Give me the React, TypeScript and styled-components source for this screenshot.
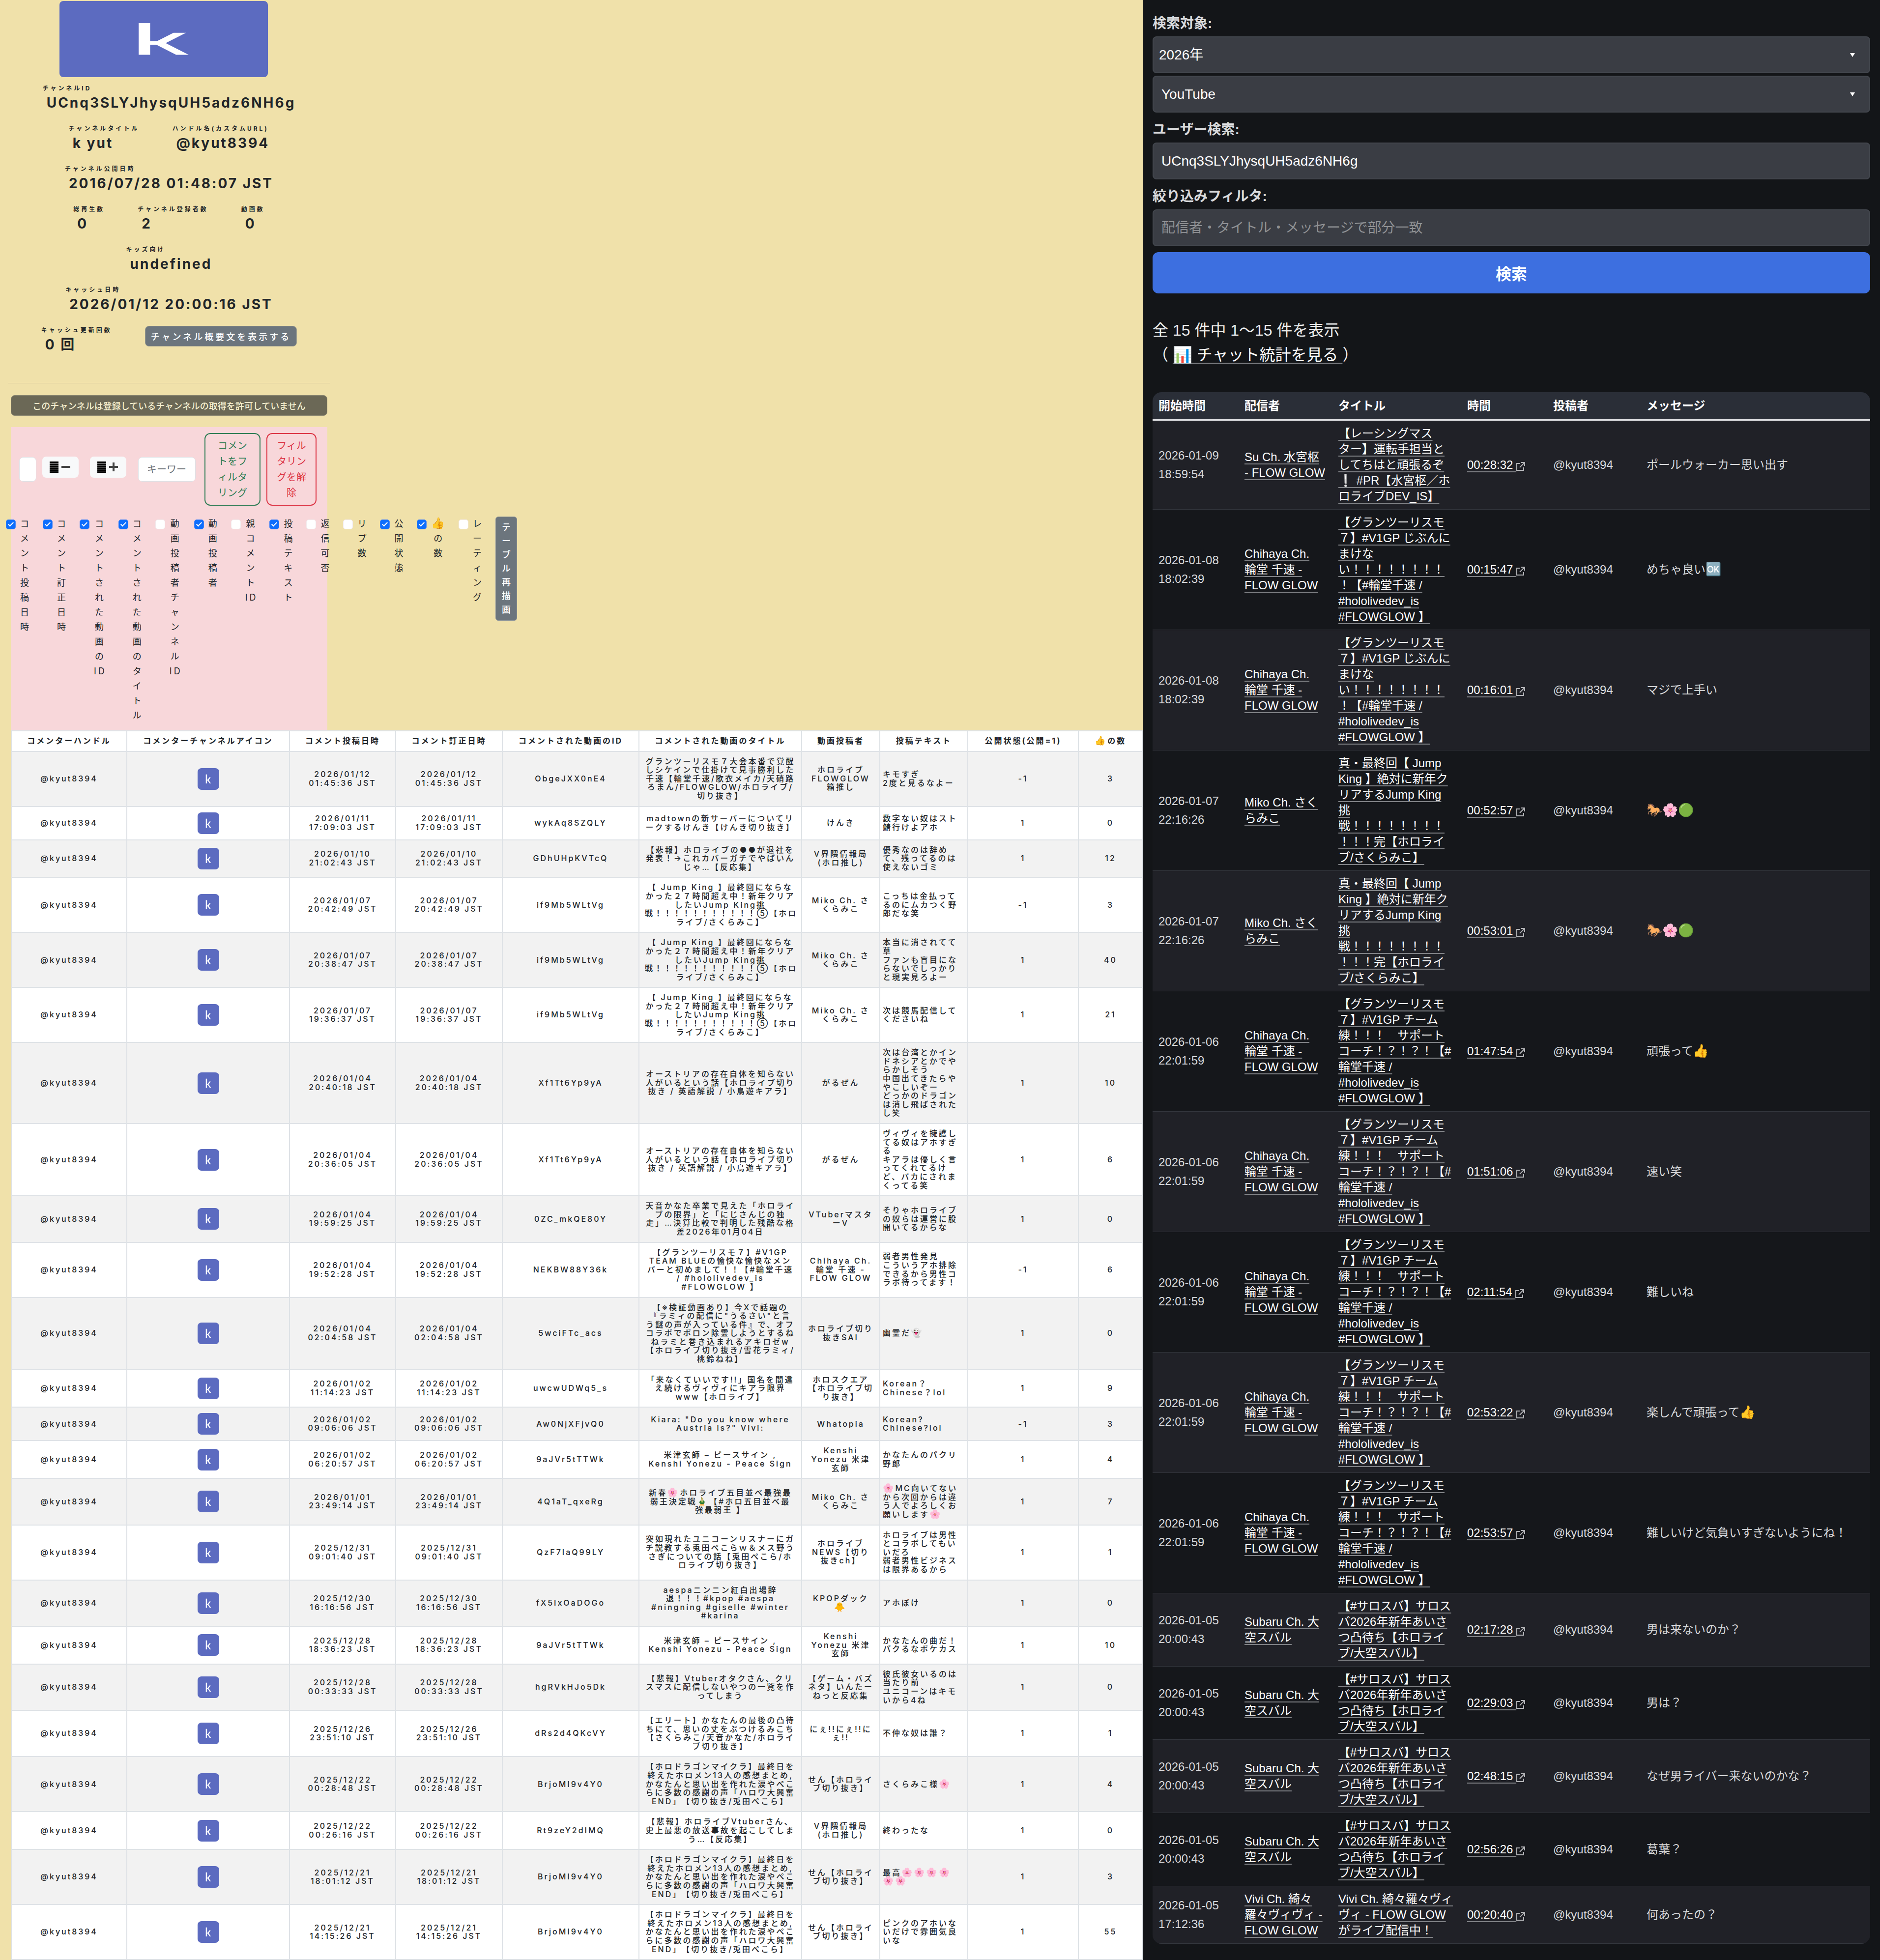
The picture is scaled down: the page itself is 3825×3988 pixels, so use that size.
import React from 'react';
import styled, { createGlobalStyle, css } from 'styled-components';

const interStack = `Inter, "Noto Sans CJK JP", sans-serif`;
const helvStack = `"Liberation Sans", "Noto Sans CJK JP", sans-serif`;

const GlobalStyle = createGlobalStyle`
  *, *::before, *::after { box-sizing: border-box; }
  body {
    margin: 0;
    background: #131518;
    text-spacing-trim: space-all;
  }
  button, input, select { font-family: inherit; margin: 0; }
`;

const Page = styled.div`
  display: grid;
  grid-template-columns: 31fr 20fr;
  min-height: 100vh;
`;

const Emoji = styled.span<{ $size: number }>`
  font-family: "Noto Color Emoji", ${interStack};
  font-size: ${(p) => p.$size}px;
  font-weight: 400;
  line-height: 0;
`;

/* ---------- left pane: channel and comments ---------- */

const ChannelPane = styled.main`
  background: #f0e1aa;
  color: #212529;
  font-family: ${interStack};
  font-size: 16px;
  padding: 2px 0 0 22px;
  min-width: 0;
`;

const Profile = styled.section`
  display: flex;
  flex-direction: column;
  align-items: center;
  gap: 24px;
  width: 656px;
  margin-left: -6px;
  padding-bottom: 60px;
  border-bottom: 1px solid #c9bd95;
`;

const Banner = styled.svg`
  width: 424px;
  height: 155px;
  margin: 0 22px -12px 0;
  border-radius: 8px;
`;

const FactRow = styled.div`
  display: flex;
  justify-content: center;
  align-items: flex-start;
  gap: 67px;
`;

const Fact = styled.dl`
  margin: 0;
  font-weight: 700;
`;

const FactName = styled.dt`
  font-size: 12px;
  line-height: 22px;
  letter-spacing: 4px;
`;

const FactValue = styled.dd`
  margin: 0 0 0 8px;
  font-size: 28px;
  line-height: 36px;
  letter-spacing: 3px;
`;

const OverviewButton = styled.button`
  height: 42px;
  margin-top: 2px;
  padding: 0 11px;
  border: 1px solid #a5a594;
  border-radius: 8px;
  background: #6c757d;
  color: #fff;
  font-size: 18px;
  font-weight: 500;
  letter-spacing: 4px;
`;

const NoticeButton = styled.button`
  display: block;
  width: 644px;
  height: 42px;
  margin: 24px 0 23px;
  border: 1px solid #8d8972;
  border-radius: 8px;
  background: #6b6856;
  color: #f5efcf;
  font-size: 18px;
  font-weight: 500;
`;

const FilterPanel = styled.section`
  width: 644px;
  padding: 12px 17px 15px;
  background: #f8d7da;
`;

const FilterBar = styled.div`
  display: flex;
  align-items: center;
  gap: 12px;
`;

const FilterInput = styled.input<{ $width: number; $pad: number }>`
  width: ${(p) => p.$width}px;
  height: 50px;
  padding: 0 ${(p) => p.$pad}px;
  border: 1px solid #dee2e6;
  border-radius: 8px;
  background: #fff;
  font-size: 20px;
  &::placeholder { color: #6b7075; }
`;

const StepButtons = styled.div`
  display: flex;
  gap: 23px;
  padding-bottom: 9px;
  margin-right: 12px;
`;

const StepButton = styled.button`
  display: grid;
  place-items: center;
  width: 74px;
  height: 43px;
  padding: 0;
  border: 0;
  border-radius: 8px;
  background: #f8f9fa;
`;

const OutlineButton = styled.button<{ $tone: string; $width: number }>`
  width: ${(p) => p.$width}px;
  height: 148px;
  padding: 0;
  border: 2px solid ${(p) => p.$tone};
  border-radius: 12px;
  background: transparent;
  color: ${(p) => p.$tone};
  font-size: 20px;
  line-height: 32px;
  white-space: pre;
`;

const FilterActions = styled.div`
  display: flex;
  gap: 12px;
  margin-left: 6px;
`;

const ColumnToggles = styled.div`
  display: flex;
  align-items: flex-start;
  gap: 24px;
  margin: 22px 0 0 -27px;
  width: max-content;
`;

const Toggle = styled.label`
  display: flex;
  align-items: flex-start;
  gap: 9px;
`;

const ToggleText = styled.span`
  font-size: 18px;
  line-height: 30px;
  letter-spacing: 4px;
  text-align: center;
  white-space: pre;
`;

const Tick = styled.input`
  appearance: none;
  position: relative;
  flex: none;
  width: 20px;
  height: 20px;
  margin-top: 6px;
  border: 1px solid #f1eaec;
  border-radius: 5px;
  background: #fff;
  &:checked {
    border-color: #4a86f5;
    background: #0d6efd;
  }
  &:checked::after {
    content: '';
    position: absolute;
    left: 6px;
    top: 2px;
    width: 6px;
    height: 11px;
    border: solid #fff;
    border-width: 0 2px 2px 0;
    transform: rotate(45deg);
  }
`;

const RedrawButton = styled.button`
  width: 44px;
  padding: 7px 0;
  border: 1px solid #8d949a;
  border-radius: 6px;
  background: #6c757d;
  color: #fff;
  font-size: 18px;
  font-weight: 500;
  line-height: 28px;
  white-space: pre;
`;

const CommentTable = styled.table`
  width: 100%;
  table-layout: fixed;
  border-collapse: collapse;
  background: #fff;
  letter-spacing: 3px;
  line-height: 1.1;
  text-align: center;
  white-space: pre;
  th, td {
    padding: 11px;
    border: 2px solid #dee2e6;
    vertical-align: middle;
  }
  th { font-weight: 700; }
  td { font-weight: 500; }
  tbody tr:nth-child(odd) { background: #f2f2f2; }
  td:nth-child(8) {
    padding-left: 5px;
    text-align: left;
  }
`;

const Icon44 = styled.svg`
  display: block;
  width: 44px;
  height: 44px;
  margin: 0 auto;
  border-radius: 8px;
`;

/* ---------- right pane: chat search ---------- */

const SearchPane = styled.aside`
  min-width: 0;
  padding: 13px 20px 24px;
  background: #131518;
  color: #eceded;
  font-family: ${helvStack};
  font-size: 28px;
`;

const FieldLabel = styled.label`
  display: block;
  margin: 12px 0 4px;
  line-height: 45px;
  font-weight: 700;
  color: #d9dadc;
`;

const control = css`
  display: block;
  width: 100%;
  height: 75px;
  border: 2px solid #43474e;
  border-radius: 8px;
  background: #3a3d44;
  color: #fff;
  font-size: 28px;
`;

const SelectBox = styled.div`
  position: relative;
  margin-bottom: 5px;
`;

const Select = styled.select<{ $inset: number }>`
  ${control}
  appearance: none;
  padding: 0 ${(p) => p.$inset}px;
`;

const Caret = styled.svg`
  position: absolute;
  right: 30px;
  top: 34px;
  width: 12px;
  height: 8px;
  pointer-events: none;
`;

const TextField = styled.input`
  ${control}
  padding: 0 16px;
  &::placeholder { color: #8f9194; }
`;

const SearchButton = styled.button`
  display: block;
  width: 100%;
  height: 84px;
  margin-top: 12px;
  border: 0;
  border-radius: 12px;
  background: #3d6fe0;
  color: #fff;
  font-size: 32px;
  font-weight: 700;
`;

const Summary = styled.p`
  margin: 50px 0 51px;
  font-size: 32px;
  line-height: 50px;
`;

const Link = styled.a`
  color: #fff;
  text-decoration: underline;
  text-decoration-color: #808286;
  text-decoration-thickness: 2px;
  text-underline-offset: 5px;
  text-decoration-skip-ink: none;
`;

const ChatTable = styled.table`
  width: 100%;
  table-layout: fixed;
  border-spacing: 0;
  border-radius: 18px;
  overflow: hidden;
  background: #15171b;
  color: #d8d9db;
  font-size: 24px;
  line-height: 32px;
  text-align: left;
  white-space: pre;
  th {
    padding: 12px 12px 11px;
    background: #2a2e37;
    border-bottom: 3px solid #dcdde0;
    color: #fff;
    font-weight: 700;
  }
  td {
    padding: 10px 12px;
    border-bottom: 1px solid #33363d;
    vertical-align: middle;
  }
  tbody tr:nth-child(odd) { background: #202127; }
`;

const Stamp = styled.time`
  line-height: 38px;
`;

const OpenIcon = styled.svg`
  width: 18px;
  height: 18px;
  vertical-align: -4px;
`;

/* ---------- drawings ---------- */

const LogoMark = () => (
  <>
    <rect width="100" height="100" fill="#5c6bc0" />
    <g fill="#fff">
      <rect x="38" y="29" width="5.5" height="41.6" />
      <rect x="43" y="52.8" width="5" height="4.6" />
      <rect width="6" height="13.6" transform="translate(54.7 41.8) skewX(-35.7)" />
      <rect width="6" height="15.3" transform="translate(45 55.3) skewX(35.7)" />
    </g>
  </>
);

const StepGlyph = ({ plus }: { plus?: boolean }) => (
  <svg width="44" height="26" viewBox="0 0 44 26" aria-hidden="true">
    {[0, 4, 8, 12, 16, 20].map((y) => (
      <rect key={y} x="0" y={y + 1} width="18" height="3" fill="#000" />
    ))}
    <rect x="24" y="10" width="18" height="4" fill="#444" />
    {plus && <rect x="31" y="3" width="4" height="18" fill="#444" />}
  </svg>
);

/* ---------- data ---------- */

const facts: [string, string][][] = [
  [['チャンネルID', 'UCnq3SLYJhysqUH5adz6NH6g']],
  [['チャンネルタイトル', 'k yut'], ['ハンドル名(カスタムURL)', '@kyut8394']],
  [['チャンネル公開日時', '2016/07/28 01:48:07 JST']],
  [['総再生数', '0'], ['チャンネル登録者数', '2'], ['動画数', '0']],
  [['キッズ向け', 'undefined']],
  [['キャッシュ日時', '2026/01/12 20:00:16 JST']],
];

const toggles: [string, boolean][] = [
  ['コメント投稿日時', true],
  ['コメント訂正日時', true],
  ['コメントされた動画のID', true],
  ['コメントされた動画のタイトル', true],
  ['動画投稿者チャンネルID', false],
  ['動画投稿者', true],
  ['親コメントID', false],
  ['投稿テキスト', true],
  ['返信可否', false],
  ['リプ数', false],
  ['公開状態', true],
  ['👍の数', true],
  ['レーティング', false],
];

/* one character per line, keeping "ID" together */
const stacked = (s: string) => (s.match(/ID|./gu) || []).join('\n');

/* sets emoji in the colour font at their own size */
const withEmoji = (s: string, size: number) =>
  s.split(/([\u{1F000}-\u{1FAFF}]+)/u).map((part, i) =>
    i % 2 ? <Emoji key={i} $size={size}>{part}</Emoji> : part,
  );

const commentHeads = [
  'コメンターハンドル', 'コメンターチャンネルアイコン', 'コメント投稿日時', 'コメント訂正日時',
  'コメントされた動画のID', 'コメントされた動画のタイトル', '動画投稿者', '投稿テキスト',
  '公開状態(公開=1)', '👍の数',
];
const commentCols = [235, 331, 216, 217, 278, 331, 159, 179, 225, 131];

const jump = '【 Jump King 】最終回にならな\nかった２７時間超え中！新年クリア\nしたいJump King挑\n戦！！！！！！！！！！！⑤【ホロ\nライブ/さくらみこ】';
const austria = 'オーストリアの存在自体を知らない\n人がいるという話【ホロライブ切り\n抜き / 英語解説 / 小鳥遊キアラ】';
const dragon = '【ホロドラゴンマイクラ】最終日を\n終えたホロメン13人の感想まとめ,\nかなたんと思い出を作れた涙やぺこ\nらに多数の感謝の声「ハロワ大興奮\nEND」【切り抜き/兎田ぺこら】';
const peace = '米津玄師 – ピースサイン ,\nKenshi Yonezu - Peace Sign';
const miko = 'Miko Ch. さ\nくらみこ';
const kenshi = 'Kenshi\nYonezu 米津\n玄師';
const sen = 'せん【ホロライ\nブ切り抜き】';

/* date, video id, title, author, text, state, likes */
const comments: [string, string, string, string, string, string, string][] = [
  ['2026/01/12\n01:45:36 JST', 'ObgeJXX0nE4', 'グランツーリスモ７大会本番で覚醒\nしシケインで仕掛けて見事勝利した\n千速【輪堂千速/歌衣メイカ/天硝路\nろまん/FLOWGLOW/ホロライブ/\n切り抜き】', 'ホロライブ\nFLOWGLOW\n箱推し', 'キモすぎ\n2度と見るなよー', '-1', '3'],
  ['2026/01/11\n17:09:03 JST', 'wykAq8SZQLY', 'madtownの新サーバーについてリ\nークするけんき【けんき切り抜き】', 'けんき', '数字ない奴はスト\n鯖行けよアホ', '1', '0'],
  ['2026/01/10\n21:02:43 JST', 'GDhUHpKVTcQ', '【悲報】ホロライブの●●が退社を\n発表！→これカバーガチでやばいん\nじゃ…【反応集】', 'V界隈情報局\n(ホロ推し)', '優秀なのは辞め\nて、残ってるのは\n使えないゴミ', '1', '12'],
  ['2026/01/07\n20:42:49 JST', 'if9Mb5WLtVg', jump, miko, 'こっちは金払って\nるのにムカつく野\n郎だな笑', '-1', '3'],
  ['2026/01/07\n20:38:47 JST', 'if9Mb5WLtVg', jump, miko, '本当に消されてて\n草\nファンも盲目にな\nらないでしっかり\nと現実見ろよー', '1', '40'],
  ['2026/01/07\n19:36:37 JST', 'if9Mb5WLtVg', jump, miko, '次は競馬配信して\nくださいね', '1', '21'],
  ['2026/01/04\n20:40:18 JST', 'Xf1Tt6Yp9yA', austria, 'がるぜん', '次は台湾とかイン\nドネシアとかでや\nらかしそう\n中国出てきたらや\nやこしいぞー\nどっかのドラゴン\nは消し飛ばされた\nし笑', '1', '10'],
  ['2026/01/04\n20:36:05 JST', 'Xf1Tt6Yp9yA', austria, 'がるぜん', 'ヴィヴィを擁護し\nてる奴はアホすぎ\nる\nキアラは優しく言\nってくれてるけ\nど、バカにされま\nくってる笑', '1', '6'],
  ['2026/01/04\n19:59:25 JST', '0ZC_mkQE80Y', '天音かなた卒業で見えた「ホロライ\nブの限界」と「にじさんじの独\n走」…決算比較で判明した残酷な格\n差2026年01月04日', 'VTuberマスタ\nーV', 'そりゃホロライブ\nの奴らは運営に股\n開いてるからな', '1', '0'],
  ['2026/01/04\n19:52:28 JST', 'NEKBW88Y36k', '【グランツーリスモ７】#V1GP\nTEAM BLUEの愉快な愉快なメン\nバーと初めまして！！【#輪堂千速\n/ #hololivedev_is\n#FLOWGLOW 】', 'Chihaya Ch.\n輪堂 千速 -\nFLOW GLOW', '弱者男性発見\nこういうアホ排除\nできるから男性コ\nラボ待ってます！', '-1', '6'],
  ['2026/01/04\n02:04:58 JST', '5wciFTc_acs', '【※検証動画あり】今Xで話題の\n『ラミィの配信に"うるさい"と言\nう謎の声が入っている件』で、オフ\nコラボでボロン除霊しようとするね\nねラミと巻き込まれるアキロゼw\n【ホロライブ切り抜き/雪花ラミィ/\n桃鈴ねね】', 'ホロライブ切り\n抜きSAI', '幽霊だ👻', '1', '0'],
  ['2026/01/02\n11:14:23 JST', 'uwcwUDWq5_s', '「来なくていいです!!」国名を間違\nえ続けるヴィヴィにキアラ限界\nwww【ホロライブ】', 'ホロスクエア\n【ホロライブ切\nり抜き】', 'Korean？\nChinese？lol', '1', '9'],
  ['2026/01/02\n09:06:06 JST', 'Aw0NjXFjvQ0', 'Kiara: "Do you know where\nAustria is?" Vivi:', 'Whatopia', 'Korean?\nChinese?lol', '-1', '3'],
  ['2026/01/02\n06:20:57 JST', '9aJVr5tTTWk', peace, kenshi, 'かなたんのパクリ\n野郎', '1', '4'],
  ['2026/01/01\n23:49:14 JST', '4Q1aT_qxeRg', '新春🌸ホロライブ五目並べ最強最\n弱王決定戦🎍【#ホロ五目並べ最\n強最弱王 】', miko, '🌸MC向いてない\nから次回からは違\nう人でよろしくお\n願いします🌸', '1', '7'],
  ['2025/12/31\n09:01:40 JST', 'QzF7IaQ99LY', '突如現れたユニコーンリスナーにガ\nチ説教する兎田ぺこらｗ＆メス野う\nさぎについての話【兎田ぺこら/ホ\nロライブ切り抜き】', 'ホロライブ\nNEWS【切り\n抜きch】', 'ホロライブは男性\nとコラボしてもい\nいだろ\n弱者男性ビジネス\nは限界あるから', '1', '1'],
  ['2025/12/30\n16:16:56 JST', 'fX5IxOaDOGo', 'aespaニンニン紅白出場辞\n退！！！#kpop #aespa\n#ningning #giselle #winter\n#karina', 'KPOPダック\n🐥', 'アホぼけ', '1', '0'],
  ['2025/12/28\n18:36:23 JST', '9aJVr5tTTWk', peace, kenshi, 'かなたんの曲だ！\nパクるなボケカス', '1', '10'],
  ['2025/12/28\n00:33:33 JST', 'hgRVkHJo5Dk', '【悲報】Vtuberオタクさん、クリ\nスマスに配信しないやつの一覧を作\nってしまう', '【ゲーム・バズ\nネタ】いんたー\nねっと反応集', '彼氏彼女いるのは\n当たり前\nユニコーンはキモ\nいから4ね', '1', '0'],
  ['2025/12/26\n23:51:10 JST', 'dRs2d4QKcVY', '【エリート】かなたんの最後の凸待\nちにて、思いの丈をぶつけるみこち\n【さくらみこ/天音かなた/ホロライ\nブ切り抜き】', 'にぇ!!にぇ!!に\nぇ!!', '不仲な奴は誰？', '1', '1'],
  ['2025/12/22\n00:28:48 JST', 'BrjoMI9v4Y0', dragon, sen, 'さくらみこ様🌸', '1', '4'],
  ['2025/12/22\n00:26:16 JST', 'Rt9zeY2dIMQ', '【悲報】ホロライブVtuberさん、\n史上最悪の放送事故を起こしてしま\nう…【反応集】', 'V界隈情報局\n(ホロ推し)', '終わったな', '1', '0'],
  ['2025/12/21\n18:01:12 JST', 'BrjoMI9v4Y0', dragon, sen, '最高🌸🌸🌸🌸\n🌸🌸', '1', '3'],
  ['2025/12/21\n14:15:26 JST', 'BrjoMI9v4Y0', dragon, sen, 'ピンクのアホいな\nいだけで雰囲気良\nいな', '1', '55'],
];

const chatHeads = ['開始時間', '配信者', 'タイトル', '時間', '投稿者', 'メッセージ'];
const chatCols = ['175px', '191px', '262px', '175px', '190px', 'auto'];

const chihaya = 'Chihaya Ch.\n輪堂 千速 -\nFLOW GLOW';
const mikoCh = 'Miko Ch. さく\nらみこ';
const subaru = 'Subaru Ch. 大\n空スバル';
const v1gp = '【グランツーリスモ\n７】#V1GP じぶんに\nまけな\nい！！！！！！！！\n！【#輪堂千速 /\n#hololivedev_is\n#FLOWGLOW 】';
const team = '【グランツーリスモ\n７】#V1GP チーム\n練！！！　サポート\nコーチ！？！？！【#\n輪堂千速 /\n#hololivedev_is\n#FLOWGLOW 】';
const king = '真・最終回【 Jump\nKing 】絶対に新年ク\nリアするJump King\n挑\n戦！！！！！！！！\n！！！完【ホロライ\nブ/さくらみこ】';
const saros = '【#サロスバ】サロス\nバ2026年新年あいさ\nつ凸待ち【ホロライ\nブ/大空スバル】';

/* start, streamer, title, offset, message */
const chats: [string, string, string, string, string][] = [
  ['2026-01-09\n18:59:54', 'Su Ch. 水宮枢\n- FLOW GLOW', '【レーシングマス\nター】運転手担当と\nしてちはと頑張るぞ\n❕ #PR【水宮枢／ホ\nロライブDEV_IS】', '00:28:32', 'ポールウォーカー思い出す'],
  ['2026-01-08\n18:02:39', chihaya, v1gp, '00:15:47', 'めちゃ良い🆗'],
  ['2026-01-08\n18:02:39', chihaya, v1gp, '00:16:01', 'マジで上手い'],
  ['2026-01-07\n22:16:26', mikoCh, king, '00:52:57', '🐎🌸🟢'],
  ['2026-01-07\n22:16:26', mikoCh, king, '00:53:01', '🐎🌸🟢'],
  ['2026-01-06\n22:01:59', chihaya, team, '01:47:54', '頑張って👍'],
  ['2026-01-06\n22:01:59', chihaya, team, '01:51:06', '速い笑'],
  ['2026-01-06\n22:01:59', chihaya, team, '02:11:54', '難しいね'],
  ['2026-01-06\n22:01:59', chihaya, team, '02:53:22', '楽しんで頑張って👍'],
  ['2026-01-06\n22:01:59', chihaya, team, '02:53:57', '難しいけど気負いすぎないようにね！'],
  ['2026-01-05\n20:00:43', subaru, saros, '02:17:28', '男は来ないのか？'],
  ['2026-01-05\n20:00:43', subaru, saros, '02:29:03', '男は？'],
  ['2026-01-05\n20:00:43', subaru, saros, '02:48:15', 'なぜ男ライバー来ないのかな？'],
  ['2026-01-05\n20:00:43', subaru, saros, '02:56:26', '葛葉？'],
  ['2026-01-05\n17:12:36', 'Vivi Ch. 綺々\n羅々ヴィヴィ -\nFLOW GLOW', 'Vivi Ch. 綺々羅々ヴィ\nヴィ - FLOW GLOW\nがライブ配信中！', '00:20:40', '何あったの？'],
];

/* ---------- page ---------- */

const Dropdown = ({ id, label, value, inset }: { id: string; label?: string; value: string; inset: number }) => (
  <SelectBox>
    <Select id={id} aria-label={label} $inset={inset} defaultValue={value}>
      <option>{value}</option>
    </Select>
    <Caret viewBox="0 0 12 8" aria-hidden="true">
      <path d="M1 0h10L6 8z" fill="#fff" />
    </Caret>
  </SelectBox>
);

export default function App() {
  return (
    <Page>
      <GlobalStyle />
      <ChannelPane>
        <Profile>
          <Banner viewBox="0 0 100 100" preserveAspectRatio="none" role="img" aria-label="k yut">
            <LogoMark />
          </Banner>
          {facts.map((row) => (
            <FactRow key={row[0][0]}>
              {row.map(([name, value]) => (
                <Fact key={name}>
                  <FactName>{name}</FactName>
                  <FactValue>{value}</FactValue>
                </Fact>
              ))}
            </FactRow>
          ))}
          <FactRow>
            <Fact>
              <FactName>キャッシュ更新回数</FactName>
              <FactValue>0 回</FactValue>
            </Fact>
            <OverviewButton type="button">チャンネル概要文を表示する</OverviewButton>
          </FactRow>
        </Profile>

        <NoticeButton type="button">このチャンネルは登録しているチャンネルの取得を許可していません</NoticeButton>

        <FilterPanel>
          <FilterBar>
            <FilterInput $width={35} $pad={8} aria-label="表示件数" />
            <StepButtons>
              <StepButton type="button" aria-label="行を減らす"><StepGlyph /></StepButton>
              <StepButton type="button" aria-label="行を増やす"><StepGlyph plus /></StepButton>
            </StepButtons>
            <FilterInput $width={117} $pad={17} placeholder="キーワード" aria-label="キーワード" />
            <FilterActions>
              <OutlineButton type="button" $tone="#2f7d55" $width={114}>{'コメン\nトをフ\nィルタ\nリング'}</OutlineButton>
              <OutlineButton type="button" $tone="#dc3545" $width={102}>{'フィル\nタリン\nグを解\n除'}</OutlineButton>
            </FilterActions>
          </FilterBar>
          <ColumnToggles>
            {toggles.map(([name, on]) => (
              <Toggle key={name}>
                <Tick type="checkbox" defaultChecked={on} />
                <ToggleText>{withEmoji(stacked(name), 22)}</ToggleText>
              </Toggle>
            ))}
            <RedrawButton type="button">{stacked('テーブル再描画')}</RedrawButton>
          </ColumnToggles>
        </FilterPanel>

        <CommentTable>
          <colgroup>
            {commentCols.map((w, i) => <col key={i} width={w} />)}
          </colgroup>
          <thead>
            <tr>{commentHeads.map((h) => <th key={h}>{withEmoji(h, 18)}</th>)}</tr>
          </thead>
          <tbody>
            {comments.map(([date, id, title, author, text, state, likes]) => (
              <tr key={date}>
                <td>@kyut8394</td>
                <td>
                  <Icon44 viewBox="0 0 100 100" role="img" aria-label="k yut"><LogoMark /></Icon44>
                </td>
                <td>{date}</td>
                <td>{date}</td>
                <td>{id}</td>
                <td>{withEmoji(title, 18)}</td>
                <td>{withEmoji(author, 18)}</td>
                <td>{withEmoji(text, 18)}</td>
                <td>{state}</td>
                <td>{likes}</td>
              </tr>
            ))}
          </tbody>
        </CommentTable>
      </ChannelPane>

      <SearchPane>
        <FieldLabel htmlFor="year">検索対象:</FieldLabel>
        <Dropdown id="year" value="2026年" inset={11} />
        <Dropdown id="site" label="サイト" value="YouTube" inset={16} />
        <FieldLabel htmlFor="user">ユーザー検索:</FieldLabel>
        <TextField id="user" defaultValue="UCnq3SLYJhysqUH5adz6NH6g" />
        <FieldLabel htmlFor="narrow">絞り込みフィルタ:</FieldLabel>
        <TextField id="narrow" placeholder="配信者・タイトル・メッセージで部分一致" />
        <SearchButton type="button">検索</SearchButton>

        <Summary>
          全 15 件中 1〜15 件を表示
          <br />
          （ <Link href="#stats">📊 チャット統計を見る </Link>）
        </Summary>

        <ChatTable>
          <colgroup>
            {chatCols.map((w, i) => <col key={i} style={{ width: w }} />)}
          </colgroup>
          <thead>
            <tr>{chatHeads.map((h) => <th key={h}>{h}</th>)}</tr>
          </thead>
          <tbody>
            {chats.map(([start, streamer, title, at, message]) => (
              <tr key={start + at}>
                <td><Stamp>{start}</Stamp></td>
                <td><Link href="#channel">{streamer}</Link></td>
                <td><Link href="#video">{title}</Link></td>
                <td>
                  <Link href="#moment">{at + ' '}</Link>
                  <OpenIcon viewBox="0 0 18 18" fill="none" stroke="#b4b5b8" strokeWidth="2" aria-hidden="true">
                    <path d="M7 3H1v14h14v-6M10 1h7v7M17 1L7 11" />
                  </OpenIcon>
                </td>
                <td>@kyut8394</td>
                <td>{withEmoji(message, 26)}</td>
              </tr>
            ))}
          </tbody>
        </ChatTable>
      </SearchPane>
    </Page>
  );
}
